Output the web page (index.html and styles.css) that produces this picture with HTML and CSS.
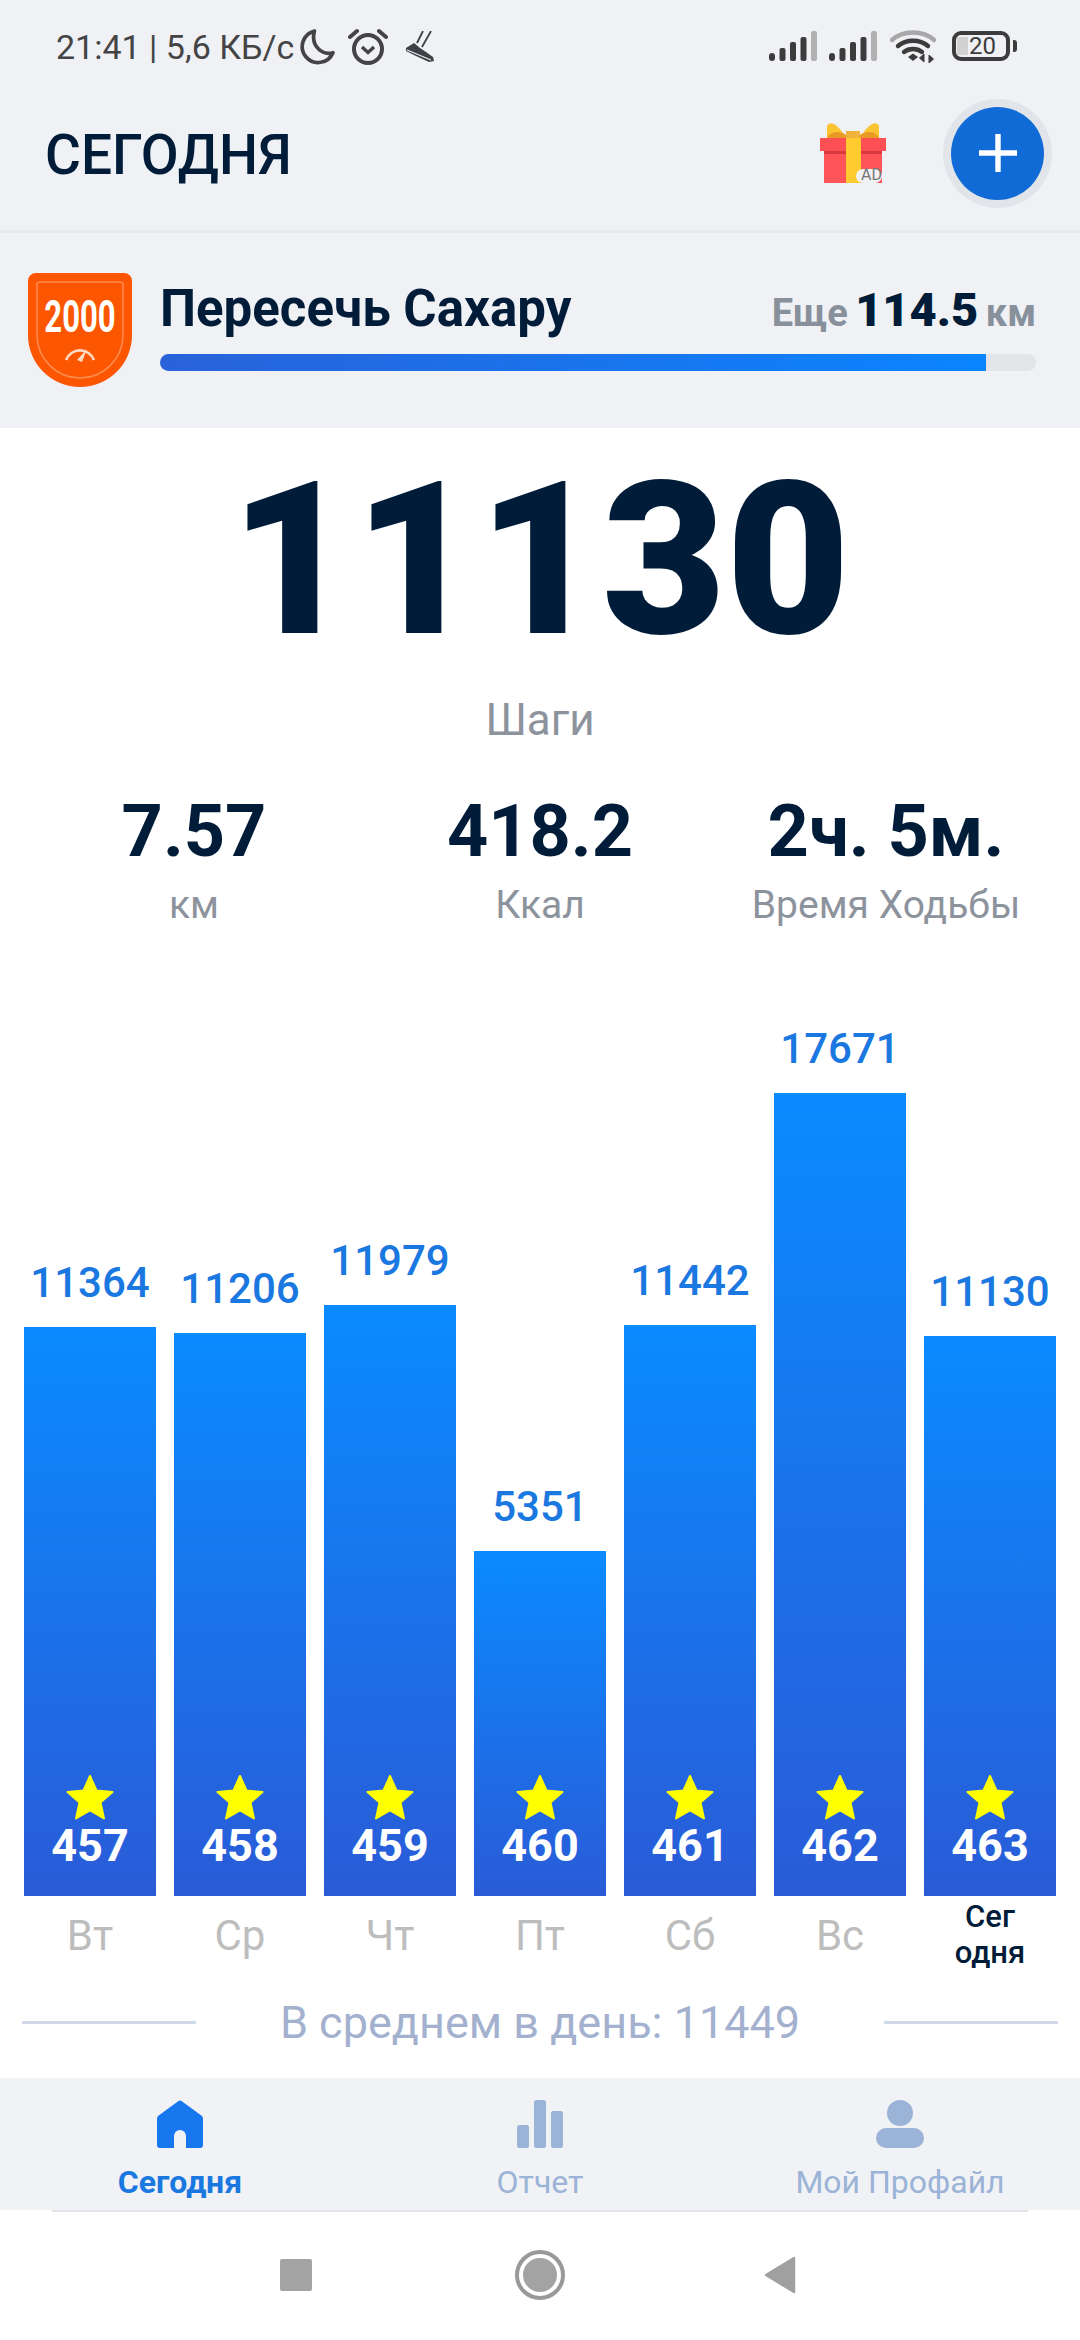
FILE: index.html
```html
<!DOCTYPE html>
<html lang="ru">
<head>
    <meta charset="UTF-8">
    <meta name="viewport" content="width=device-width, initial-scale=1.0">
    <title>Сегодня</title>
    <link rel="stylesheet" href="styles.css">
</head>
<body>
    <svg class="icon-defs" width="0" height="0">
        <symbol id="star" viewBox="0 0 48 45">
            <path d="M24 1 L30.5 15.5 L46.5 17 L34.5 27.5 L38 43.5 L24 35.5 L10 43.5 L13.5 27.5 L1.5 17 L17.5 15.5 Z" fill="#ffff00" stroke="#ffff00" stroke-width="2" stroke-linejoin="round"/>
        </symbol>
        <symbol id="signal" viewBox="0 0 48 30">
            <rect x="0" y="22" width="6" height="8" rx="3" fill="#3c3c3c"/>
            <rect x="10.5" y="17" width="6" height="13" rx="2" fill="#3c3c3c"/>
            <rect x="21" y="11" width="6" height="19" rx="2" fill="#3c3c3c"/>
            <rect x="31.5" y="6" width="6" height="24" rx="2" fill="#3c3c3c"/>
            <rect x="42" y="0" width="6" height="30" rx="2" fill="#b0b0b0"/>
        </symbol>
    </svg>

    <div class="status-bar">
        <div class="status-left">
            <span class="status-text">21:41 | 5,6 КБ/с</span>
            <svg class="icon-moon" width="37" height="37" viewBox="0 0 36 36">
                <path d="M15 3 A15.5 15.5 0 1 0 33 24 C23 27 11 18 15 3 Z" fill="none" stroke="#444" stroke-width="3.6" stroke-linejoin="round"/>
            </svg>
            <svg class="icon-alarm" width="40" height="37" viewBox="0 0 40 37">
                <circle cx="20" cy="21" r="14" fill="none" stroke="#444" stroke-width="4"/>
                <path d="M14 19 L20 24.5 L26 19" fill="none" stroke="#444" stroke-width="3.4"/>
                <path d="M2 9 L9 3 M38 9 L31 3" stroke="#444" stroke-width="4" stroke-linecap="round"/>
            </svg>
            <svg class="icon-shoe" width="31" height="32" viewBox="0 0 31 32">
                <path d="M0 17 L8 12 L14 17 L20 21 L27 26 L28 30 L23 31 L10 25 L0 20 Z" fill="#3d4045"/>
                <path d="M17 0 L11 12 M25 0 L16 16" fill="none" stroke="#3d4045" stroke-width="1.8"/>
                <path d="M1 19 L25 29" stroke="#eff1f5" stroke-width="1.1"/>
            </svg>
        </div>
        <div class="status-right">
            <svg width="48" height="30"><use href="#signal"/></svg>
            <svg width="48" height="30"><use href="#signal"/></svg>
            <svg class="icon-wifi" width="46" height="34" viewBox="0 0 46 34">
                <path d="M2 11 C13 1 33 1 44 11" fill="none" stroke="#a8a8a8" stroke-width="4.4" stroke-linecap="round"/>
                <path d="M8 17 C16 10 30 10 38 17" fill="none" stroke="#3c3c3c" stroke-width="4.4" stroke-linecap="round"/>
                <path d="M14 23 C19 19 27 19 32 23" fill="none" stroke="#3c3c3c" stroke-width="4.4" stroke-linecap="round"/>
                <path d="M18 28 L23 24.5 L28 28 L23 32 Z" fill="#3c3c3c"/>
                <path d="M34 25 V33 L29.5 29 Z M39 34 V26 L43.5 30 Z" fill="#3c3c3c" stroke="#3c3c3c" stroke-width="1"/>
            </svg>
            <div class="battery">
                <div class="battery-box">
                    <span class="battery-level"></span>
                    <span class="battery-text">20</span>
                </div>
                <span class="battery-nub"></span>
            </div>
        </div>
    </div>

    <header class="top-header">
        <h1 class="page-title">СЕГОДНЯ</h1>
        <div class="gift">
            <svg width="66" height="61" viewBox="0 0 66 61">
                <path d="M26 16 C18 2 10 -2 7 4 L7 16 Z" fill="#fdc431"/>
                <path d="M40 16 C48 2 56 -2 59 4 L59 16 Z" fill="#fdc431"/>
                <path d="M7 16 C10 9 20 8 26 13 L26 16 Z M59 16 C56 9 46 8 40 13 L40 16 Z" fill="#e99a24"/>
                <rect x="26" y="9" width="14" height="8" fill="#f0b23a"/>
                <rect x="4" y="28" width="58" height="33" fill="#ff5558"/>
                <rect x="0" y="16" width="66" height="13" fill="#fc5054"/>
                <rect x="4" y="29" width="58" height="3" fill="#d93a3f"/>
                <rect x="26" y="16" width="15" height="45" fill="#ffcb2e"/>
                <rect x="36" y="47" width="26" height="14" rx="7" fill="#f0f2f6"/>
            </svg>
            <span class="gift-ad">AD</span>
        </div>
        <div class="add-button">
            <svg width="40" height="40" viewBox="0 0 40 40">
                <path d="M20 1 V39 M1 20 H39" stroke="#fff" stroke-width="5.4"/>
            </svg>
        </div>
    </header>

    <section class="challenge">
        <div class="badge">
            <svg width="104" height="114" viewBox="0 0 104 114">
                <path d="M8 0 H96 A8 8 0 0 1 104 8 V62 A52 52 0 0 1 0 62 V8 A8 8 0 0 1 8 0 Z" fill="#fc5700"/>
                <path d="M12 9 H92 A3 3 0 0 1 95 12 V62 A43 43 0 0 1 9 62 V12 A3 3 0 0 1 12 9 Z" fill="none" stroke="#ff8a4d" stroke-width="1.6"/>
                <path d="M38 87 A15 15 0 0 1 66 87" fill="none" stroke="#ffd9c4" stroke-width="2.6"/>
                <path d="M49 87 L59 76 L54 89 Z" fill="#ffd9c4"/>
            </svg>
            <span class="badge-text">2000</span>
        </div>
        <div class="challenge-body">
            <div class="challenge-row">
                <span class="challenge-name">Пересечь Сахару</span>
                <span class="challenge-left">Еще <b>114.5</b> км</span>
            </div>
            <div class="progress"><div class="progress-fill" style="width: 826px"></div></div>
        </div>
    </section>

    <main class="main">
        <div class="steps-total">11130</div>
        <div class="steps-label">Шаги</div>

        <div class="stats">
            <div class="stat">
                <div class="stat-value">7.57</div>
                <div class="stat-label">км</div>
            </div>
            <div class="stat">
                <div class="stat-value">418.2</div>
                <div class="stat-label">Ккал</div>
            </div>
            <div class="stat">
                <div class="stat-value">2ч. 5м.</div>
                <div class="stat-label">Время Ходьбы</div>
            </div>
        </div>

        <div class="chart">
            <div class="day">
                <div class="day-value">11364</div>
                <div class="bar" style="height: 569px">
                    <svg class="star" width="48" height="45"><use href="#star"/></svg>
                    <div class="bar-num">457</div>
                </div>
                <div class="day-name">Вт</div>
            </div>
            <div class="day">
                <div class="day-value">11206</div>
                <div class="bar" style="height: 563px">
                    <svg class="star" width="48" height="45"><use href="#star"/></svg>
                    <div class="bar-num">458</div>
                </div>
                <div class="day-name">Ср</div>
            </div>
            <div class="day">
                <div class="day-value">11979</div>
                <div class="bar" style="height: 591px">
                    <svg class="star" width="48" height="45"><use href="#star"/></svg>
                    <div class="bar-num">459</div>
                </div>
                <div class="day-name">Чт</div>
            </div>
            <div class="day">
                <div class="day-value">5351</div>
                <div class="bar" style="height: 345px">
                    <svg class="star" width="48" height="45"><use href="#star"/></svg>
                    <div class="bar-num">460</div>
                </div>
                <div class="day-name">Пт</div>
            </div>
            <div class="day">
                <div class="day-value">11442</div>
                <div class="bar" style="height: 571px">
                    <svg class="star" width="48" height="45"><use href="#star"/></svg>
                    <div class="bar-num">461</div>
                </div>
                <div class="day-name">Сб</div>
            </div>
            <div class="day">
                <div class="day-value">17671</div>
                <div class="bar" style="height: 803px">
                    <svg class="star" width="48" height="45"><use href="#star"/></svg>
                    <div class="bar-num">462</div>
                </div>
                <div class="day-name">Вс</div>
            </div>
            <div class="day">
                <div class="day-value">11130</div>
                <div class="bar" style="height: 560px">
                    <svg class="star" width="48" height="45"><use href="#star"/></svg>
                    <div class="bar-num">463</div>
                </div>
                <div class="day-name today">Сег<br>одня</div>
            </div>
        </div>

        <div class="average">
            <span class="average-line"></span>
            <span class="average-text">В среднем в день: 11449</span>
            <span class="average-line"></span>
        </div>
    </main>

    <nav class="tabs">
        <div class="tab active">
            <svg width="48" height="48" viewBox="0 0 48 48">
                <path d="M22.5 1 Q24 0 25.5 1 L46 16 Q47 17 47 19 V45 Q47 48 44 48 H30 V36 A6 6 0 0 0 18 36 V48 H4 Q1 48 1 45 V19 Q1 17 2 16 Z" fill="#1677ee"/>
            </svg>
            <span class="tab-label">Сегодня</span>
        </div>
        <div class="tab">
            <svg width="48" height="48" viewBox="0 0 48 48">
                <rect x="1" y="25" width="12" height="23" rx="2.5" fill="#9ab3d6"/>
                <rect x="18" y="0" width="12" height="48" rx="2.5" fill="#9ab3d6"/>
                <rect x="35" y="11" width="12" height="37" rx="2.5" fill="#9ab3d6"/>
            </svg>
            <span class="tab-label">Отчет</span>
        </div>
        <div class="tab">
            <svg width="48" height="48" viewBox="0 0 48 48">
                <circle cx="24" cy="13" r="13" fill="#9ab3d6"/>
                <rect x="0" y="28" width="48" height="20" rx="10" fill="#9ab3d6"/>
            </svg>
            <span class="tab-label">Мой Профайл</span>
        </div>
    </nav>

    <div class="system-nav">
        <span class="sys-square"></span>
        <span class="sys-circle"><span class="sys-dot"></span></span>
        <svg width="32" height="38" viewBox="0 0 32 38">
            <path d="M30 2 V36 L2 19 Z" fill="#a0a0a0" stroke="#a0a0a0" stroke-width="2.4" stroke-linejoin="round"/>
        </svg>
    </div>
</body>
</html>
```

FILE: styles.css
```css
:root {
    --dark: #011c38;
    --blue: #1a78e0;
    --panel: #eff1f5;
    --tab-gray: #9ab3d6;
}

* {
    margin: 0;
    padding: 0;
    box-sizing: border-box;
    font-family: Roboto, "Noto Sans", sans-serif;
}

body {
    width: 1080px;
    height: 2340px;
    overflow: hidden;
    background-color: white;
    color: var(--dark);
}

svg {
    display: block;
    flex-shrink: 0;
}

.icon-defs {
    position: absolute;
}

.status-bar {
    height: 90px;
    padding: 28px 63px 0 56px;
    display: flex;
    justify-content: space-between;
    align-items: flex-start;
    background-color: var(--panel);
}

.status-left {
    display: flex;
    align-items: center;
    height: 37px;
}

.status-text {
    font-size: 34px;
    color: #444;
    line-height: 37px;
    width: 243px;
    margin-top: 2px;
    white-space: nowrap;
}

.icon-alarm {
    margin-left: 12px;
}

.icon-shoe {
    margin-left: 18px;
}

.status-right {
    display: flex;
    align-items: center;
    gap: 12px;
    height: 36px;
}

.icon-wifi {
    margin-left: 1px;
}

.battery {
    display: flex;
    align-items: center;
    margin-left: 4px;
    gap: 3px;
}

.battery-box {
    width: 58px;
    height: 30px;
    border: 4px solid #3c3c3c;
    border-radius: 9px;
    display: flex;
    align-items: center;
    padding-left: 1px;
}

.battery-level {
    width: 11px;
    height: 18px;
    background-color: #d2d2d2;
}

.battery-text {
    font-size: 24px;
    line-height: 22px;
    color: #3c3c3c;
    margin-left: 1px;
}

.battery-nub {
    width: 4px;
    height: 12px;
    border-radius: 0 3px 3px 0;
    background-color: #3c3c3c;
}

.top-header {
    height: 143px;
    padding: 0 28px 0 45px;
    display: flex;
    align-items: center;
    background-color: var(--panel);
    border-bottom: 3px solid #e7e9ed;
}

.page-title {
    font-size: 55px;
    font-weight: 500;
    line-height: 64px;
    flex: 1;
    margin-top: -10px;
}

.gift {
    position: relative;
    margin: -16px 65px 0 0;
}

.gift-ad {
    position: absolute;
    right: 4px;
    bottom: -1px;
    font-size: 16px;
    line-height: 18px;
    color: #777;
}

.add-button {
    width: 93px;
    height: 93px;
    border-radius: 50%;
    background-color: #116bd6;
    box-shadow: 0 0 0 8px #e1e4e8;
    display: flex;
    align-items: center;
    justify-content: center;
    margin: -14px 8px 0 0;
}

.challenge {
    height: 195px;
    padding: 40px 44px 0 28px;
    display: flex;
    gap: 28px;
    background-color: var(--panel);
}

.badge {
    position: relative;
    width: 104px;
    height: 114px;
}

.badge-text {
    position: absolute;
    top: 21px;
    left: 0;
    width: 104px;
    font-size: 45px;
    font-weight: 700;
    line-height: 45px;
    text-align: center;
    color: white;
    transform: scaleX(0.69);
}

.challenge-body {
    flex: 1;
}

.challenge-row {
    display: flex;
    justify-content: space-between;
    align-items: baseline;
    height: 62px;
    line-height: 72px;
}

.challenge-name {
    font-size: 51px;
    font-weight: 700;
}

.challenge-left {
    font-size: 38px;
    font-weight: 700;
    color: #87909b;
    word-spacing: -2px;
}

.challenge-left b {
    font-size: 47px;
    color: var(--dark);
}

.progress {
    height: 17px;
    margin-top: 19px;
    border-radius: 9px;
    background-color: #e2e4e8;
    overflow: hidden;
}

.progress-fill {
    height: 100%;
    background: linear-gradient(to right, #2962d9, #0a85ff);
}

.main {
    height: 1650px;
    padding-top: 28px;
    background-color: white;
}

.steps-total {
    font-size: 214px;
    font-weight: 900;
    line-height: 208px;
    text-align: center;
}

.steps-label {
    margin-top: 31px;
    font-size: 44px;
    line-height: 50px;
    text-align: center;
    color: #8d939c;
}

.stats {
    display: grid;
    grid-template-columns: repeat(3, 1fr);
    padding: 0 21px;
    margin-top: 47px;
    text-align: center;
}

.stat-value {
    font-size: 72px;
    font-weight: 700;
    line-height: 80px;
}

.stat-label {
    margin-top: 10px;
    font-size: 39px;
    line-height: 46px;
    color: #8d939c;
}

.chart {
    height: 1046px;
    padding: 0 24px;
    display: flex;
    gap: 18px;
    align-items: flex-end;
}

.day {
    width: 132px;
    text-align: center;
}

.day-value {
    font-size: 42px;
    font-weight: 500;
    line-height: 48px;
    margin-bottom: 20px;
    color: var(--blue);
}

.bar {
    display: flex;
    flex-direction: column;
    align-items: center;
    justify-content: flex-end;
    padding-bottom: 24px;
    background: linear-gradient(to bottom, #0a8bff, #2a5bd7);
}

.bar-num {
    font-size: 45px;
    font-weight: 700;
    line-height: 52px;
    color: white;
}

.day-name {
    height: 78px;
    display: flex;
    align-items: center;
    justify-content: center;
    font-size: 42px;
    color: #bdbdbd;
}

.day-name.today {
    display: block;
    padding-top: 3px;
    font-size: 31px;
    font-weight: 500;
    line-height: 36px;
    color: var(--dark);
}

.average {
    display: flex;
    align-items: center;
    justify-content: space-between;
    height: 50px;
    margin-top: 23px;
    padding: 0 22px;
}

.average-line {
    width: 174px;
    height: 3px;
    background-color: #cfd8e6;
}

.average-text {
    font-size: 45px;
    color: #a3b1cf;
}

.tabs {
    height: 132px;
    display: grid;
    grid-template-columns: repeat(3, 1fr);
    padding-top: 22px;
    background-color: #f0f2f5;
    position: relative;
}

.tabs::after {
    content: "";
    position: absolute;
    left: 52px;
    right: 52px;
    bottom: -2px;
    height: 2px;
    background-color: #e2e4e8;
}

.tab {
    display: flex;
    flex-direction: column;
    align-items: center;
    color: var(--tab-gray);
}

.tab-label {
    margin-top: 16px;
    font-size: 32px;
    line-height: 36px;
}

.tab.active .tab-label {
    font-weight: 700;
    color: var(--blue);
}

.system-nav {
    height: 130px;
    display: flex;
    justify-content: space-between;
    align-items: center;
    padding: 0 284px 0 280px;
    background-color: white;
}

.sys-square {
    width: 32px;
    height: 32px;
    border-radius: 2px;
    background-color: #a3a3a3;
}

.sys-circle {
    width: 50px;
    height: 50px;
    margin-left: 4px;
    border-radius: 50%;
    border: 4px solid #999;
    display: flex;
    align-items: center;
    justify-content: center;
}

.sys-dot {
    width: 34px;
    height: 34px;
    border-radius: 50%;
    background-color: #a3a3a3;
}
```
